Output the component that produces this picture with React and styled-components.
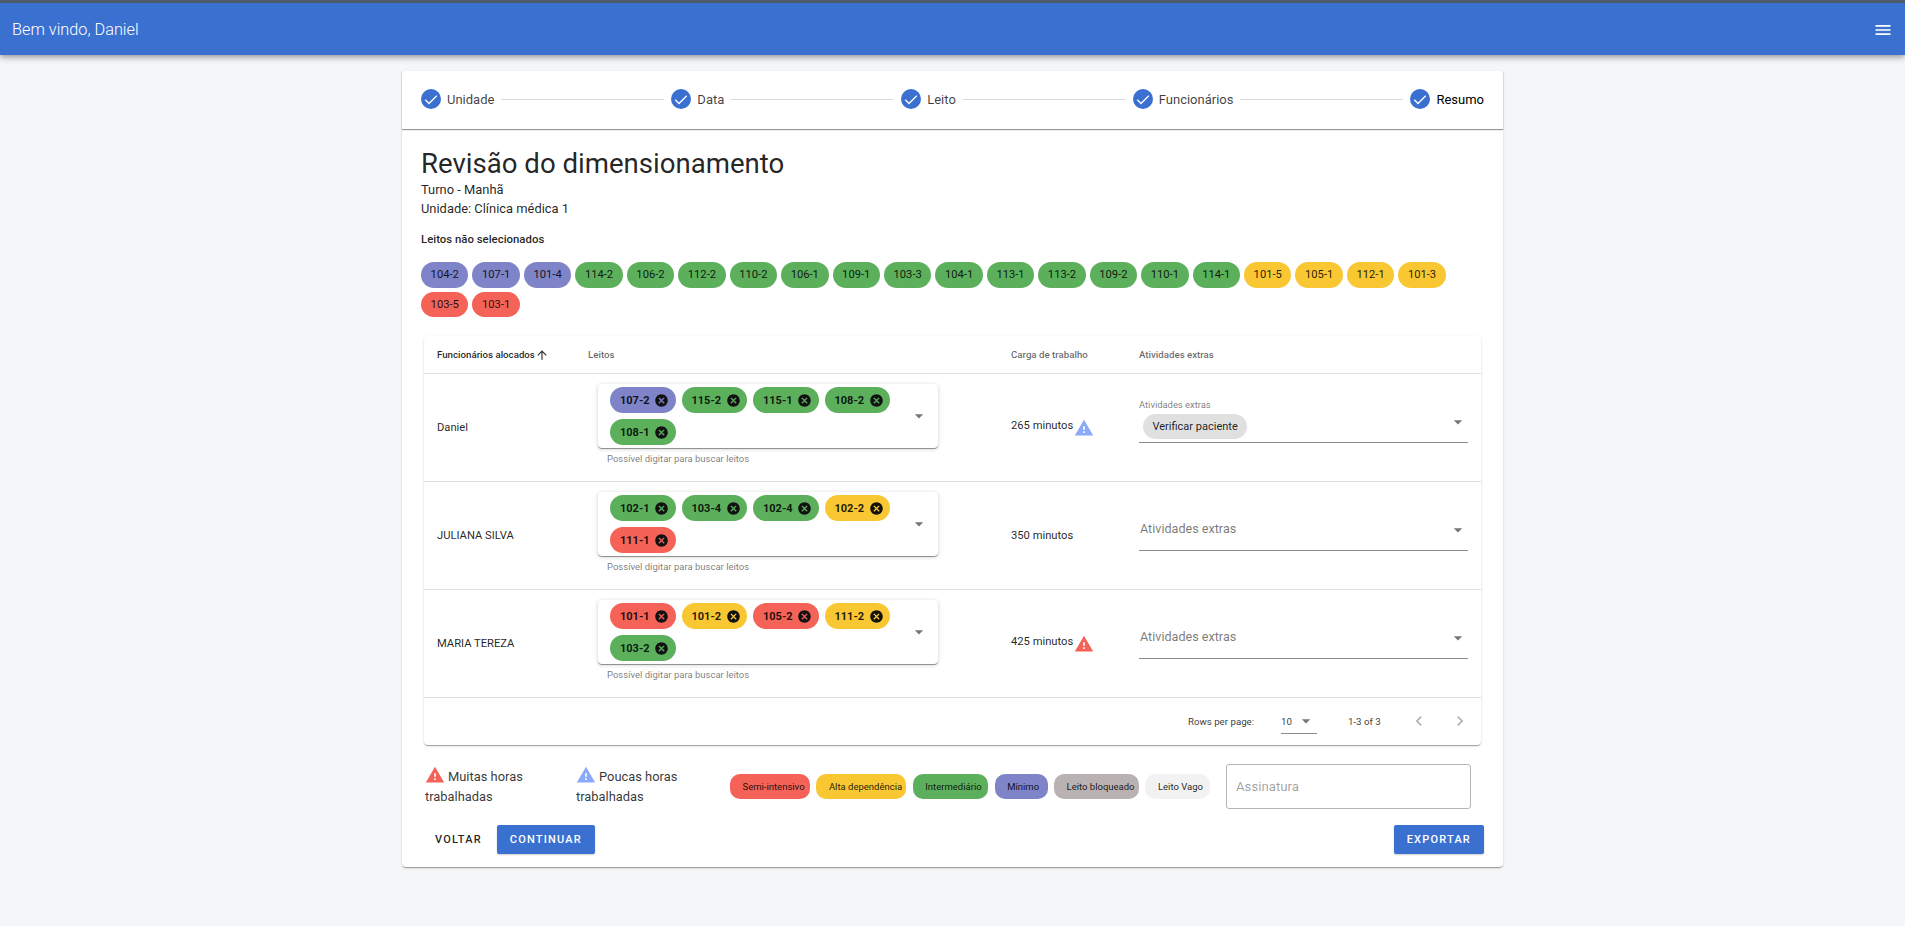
import React from "react"
import styled, { createGlobalStyle } from "styled-components"

const tones = {
    purple: "#7f83c8",
    green: "#5cb05c",
    yellow: "#f9c732",
    red: "#f56258",
    grey: "#bab2b2",
    light: "#f2f2f2",
}

const GlobalStyle = createGlobalStyle`
    html, body {
        margin: 0;
        padding: 0;
        background: #f5f6f8;
        font-family: Roboto, "Liberation Sans", sans-serif;
        color: rgba(0, 0, 0, 0.87);
    }
    * { box-sizing: border-box; }
`

const Page = styled.div`
    min-height: 926px;
    background: #f5f6f8;
`

const AppBar = styled.header`
    height: 55px;
    border-top: 3px solid #4d5c68;
    background: #3a70d0;
    color: #fff;
    display: flex;
    align-items: center;
    justify-content: space-between;
    padding: 0 12px;
    box-shadow: 0 2px 4px -1px rgba(0,0,0,.2), 0 4px 5px 0 rgba(0,0,0,.14), 0 1px 10px 0 rgba(0,0,0,.12);
`

const AppTitle = styled.div`
    font-size: 16.3px;
    font-weight: 300;
    line-height: 24px;
    margin-top: 1px;
`

const MenuIcon = styled.svg`
    width: 20px;
    height: 20px;
    fill: #fff;
    margin-top: 1px;
`

const Card = styled.main`
    width: 1101px;
    margin: 16px auto 0;
    background: #fff;
    border-radius: 4px;
    box-shadow: 0 2px 1px -1px rgba(0,0,0,.2), 0 1px 1px 0 rgba(0,0,0,.14), 0 1px 3px 0 rgba(0,0,0,.12);
`

const Stepper = styled.nav`
    height: 58px;
    display: flex;
    align-items: center;
    padding: 0 19px 2px 17px;
    box-shadow: 0 1px 1px rgba(0,0,0,.4);
`

const Step = styled.div`
    display: flex;
    align-items: center;
    gap: 4px;
    font-size: 13px;
    color: ${({$active}) => $active ? "#000" : "rgba(0,0,0,.75)"};
`

const StepIcon = styled.svg`
    width: 24px;
    height: 24px;
    display: block;
`

const Connector = styled.div`
    flex: 1;
    height: 1px;
    margin: 0 5px 0 7px;
    background: #dcdcdc;
`

const Content = styled.section`
    padding: 18px 19px 13px;
`

const Title = styled.h1`
    margin: 0;
    font-size: 27.6px;
    font-weight: 400;
    line-height: 34px;
`

const SubLine = styled.div`
    font-size: 12.9px;
    line-height: 18.5px;
`

const SectionLabel = styled.div`
    margin-top: 14px;
    font-size: 11.4px;
    font-weight: 500;
    line-height: 14px;
`

const BedList = styled.div`
    display: flex;
    flex-wrap: wrap;
    gap: 4px;
    margin-top: 16px;
`

const Bed = styled.div`
    height: 25.5px;
    display: flex;
    align-items: center;
    padding: 0 9.6px;
    border-radius: 13px;
    font-size: 11.2px;
    background: ${({$tone}) => tones[$tone]};
`

const TablePaper = styled.div`
    margin: 19px 3px 0;
    border-radius: 4px;
    background: #fff;
    box-shadow: 0 2px 1px -1px rgba(0,0,0,.2), 0 1px 1px 0 rgba(0,0,0,.14), 0 1px 3px 0 rgba(0,0,0,.12);
`

const Row = styled.div`
    display: grid;
    grid-template-columns: 151px 423px 128px 1fr;
    height: ${({$head}) => $head ? "38px" : "108px"};
    border-bottom: 1px solid #e0e0e0;
    padding-left: 13px;
    padding-right: 13px;
    align-items: ${({$head}) => $head ? "center" : "stretch"};
`

const HeadCell = styled.div`
    display: flex;
    align-items: center;
    font-size: 9.7px;
    font-weight: 500;
    color: ${({$sorted}) => $sorted ? "rgba(0,0,0,.87)" : "rgba(0,0,0,.6)"};
`

const SortIcon = styled.svg`
    width: 14px;
    height: 14px;
    fill: rgba(0,0,0,.8);
`

const TextCell = styled.div`
    display: flex;
    align-items: center;
    font-size: 11.2px;
    padding-bottom: 1px;
`

const BedCell = styled.div`
    padding: 10px 0 0 10px;
`

const SelectPaper = styled.div`
    position: relative;
    width: 340px;
    height: 64px;
    padding: 3px 36px 0 12px;
    display: flex;
    flex-wrap: wrap;
    align-content: flex-start;
    gap: 6px;
    border-radius: 4px;
    background: #fff;
    box-shadow: 0 1px 0 rgba(0,0,0,.35), 0 1px 4px rgba(0,0,0,.2);
`

const BedChip = styled.div`
    width: 65.5px;
    height: 26px;
    display: flex;
    align-items: center;
    justify-content: space-between;
    padding: 0 8.5px 0 10px;
    border-radius: 13px;
    font-size: 11px;
    font-weight: 700;
    background: ${({$tone}) => tones[$tone]};
`

const ChipClose = styled.svg`
    width: 15px;
    height: 15px;
    margin-right: -2px;
    fill: #111;
    flex: none;
`

const DropArrow = styled.svg`
    position: absolute;
    right: ${({$right}) => $right}px;
    top: ${({$top}) => $top}px;
    width: 20px;
    height: 20px;
    fill: rgba(0,0,0,.54);
`

const HelperText = styled.div`
    margin: 5px 0 0 9px;
    font-size: 9.5px;
    line-height: 12px;
    color: rgba(0,0,0,.54);
`

const LoadCell = styled(TextCell)`
    gap: 1px;
    padding-bottom: ${({$warn}) => $warn ? "5px" : "1px"};
`

const WarnIcon = styled.svg`
    width: 20px;
    height: 20px;
    flex: none;
    fill: ${({$color}) => $color};
    margin-top: ${({$shift}) => $shift || 0}px;
`

const ExtrasCell = styled.div`
    padding-top: 25px;
`

const Field = styled.div`
    position: relative;
    height: 44px;
    display: flex;
    flex-direction: column;
    justify-content: flex-end;
    border-bottom: 1px solid #8c8c8c;
`

const FieldLabel = styled.div`
    font-size: 9.4px;
    line-height: 12px;
    color: rgba(0,0,0,.54);
`

const FieldChip = styled.div`
    align-self: flex-start;
    height: 25px;
    margin: 3px 0 3px 4px;
    padding: 0 9.5px;
    display: flex;
    align-items: center;
    border-radius: 13px;
    font-size: 11px;
    background: #e0e0e0;
`

const FieldPlaceholder = styled.div`
    margin: 0 0 11px 1px;
    font-size: 12.6px;
    line-height: 20px;
    color: rgba(0,0,0,.54);
`

const TableFooter = styled.div`
    height: 47px;
    display: flex;
    align-items: center;
    padding-bottom: 1px;
    font-size: 9.7px;
    color: rgba(0,0,0,.8);
`

const RowsLabel = styled.div`
    margin-left: 764px;
    width: 93px;
`

const RowsSelect = styled.div`
    position: relative;
    width: 36px;
    height: 24px;
    display: flex;
    align-items: center;
    border-bottom: 1px solid #8c8c8c;
    margin-top: 1px;
`

const PageInfo = styled.div`
    margin-left: 31px;
    width: 52px;
`

const PageArrow = styled.svg`
    width: 20px;
    height: 20px;
    fill: rgba(0,0,0,.3);
    margin-left: ${({$gap}) => $gap}px;
`

const Legend = styled.div`
    display: flex;
    align-items: center;
    margin-top: 19px;
    padding: 0 13px 0 4px;
`

const Note = styled.div`
    width: ${({$width}) => $width}px;
    margin-top: -2px;
    padding-right: 20px;
    font-size: 12.9px;
    line-height: 20px;
    color: rgba(0,0,0,.8);
`

const NoteIcon = styled(WarnIcon)`
    display: inline-block;
    vertical-align: -4px;
    margin-right: 3px;
`

const LegendChips = styled.div`
    display: flex;
    gap: 6.4px;
`

const LegendChip = styled.div`
    width: ${({$width}) => $width}px;
    height: 25px;
    display: flex;
    align-items: center;
    padding-left: 12.5px;
    border-radius: 10px;
    font-size: 9.5px;
    white-space: nowrap;
    background: ${({$tone}) => tones[$tone]};
`

const SignatureBox = styled.div`
    width: 245px;
    height: 45px;
    margin-left: auto;
    display: flex;
    align-items: center;
    padding-left: 9px;
    border: 1px solid #b5b5b5;
    border-radius: 3px;
    font-size: 13.2px;
    color: rgba(0,0,0,.38);
`

const Actions = styled.div`
    display: flex;
    align-items: center;
    margin-top: 16px;
`

const Button = styled.button`
    height: 29px;
    border: none;
    border-radius: 2px;
    font-family: inherit;
    font-size: 11px;
    font-weight: 500;
    letter-spacing: 1.2px;
    padding: 0 ${({$ghost}) => $ghost ? "15px 0 14px" : "13px"};
    margin-left: ${({$push}) => $push ? "auto" : "0"};
    color: ${({$ghost}) => $ghost ? "rgba(0,0,0,.87)" : "#fff"};
    background: ${({$ghost}) => $ghost ? "transparent" : "#3a70d0"};
    box-shadow: ${({$ghost}) => $ghost ? "none" : "0 1px 2px rgba(0,0,0,.2)"};
`

const steps = ["Unidade", "Data", "Leito", "Funcionários", "Resumo"]

const freeBeds = [
    ["104-2", "purple"], ["107-1", "purple"], ["101-4", "purple"],
    ["114-2", "green"], ["106-2", "green"], ["112-2", "green"], ["110-2", "green"],
    ["106-1", "green"], ["109-1", "green"], ["103-3", "green"], ["104-1", "green"],
    ["113-1", "green"], ["113-2", "green"], ["109-2", "green"], ["110-1", "green"],
    ["114-1", "green"], ["101-5", "yellow"], ["105-1", "yellow"], ["112-1", "yellow"],
    ["101-3", "yellow"], ["103-5", "red"], ["103-1", "red"],
]

const staff = [
    {
        name: "Daniel",
        load: "265 minutos",
        warn: "#8aa9fb",
        extra: "Verificar paciente",
        beds: [["107-2", "purple"], ["115-2", "green"], ["115-1", "green"], ["108-2", "green"], ["108-1", "green"]],
    },
    {
        name: "JULIANA SILVA",
        load: "350 minutos",
        beds: [["102-1", "green"], ["103-4", "green"], ["102-4", "green"], ["102-2", "yellow"], ["111-1", "red"]],
    },
    {
        name: "MARIA TEREZA",
        load: "425 minutos",
        warn: "#f56258",
        beds: [["101-1", "red"], ["101-2", "yellow"], ["105-2", "red"], ["111-2", "yellow"], ["103-2", "green"]],
    },
]

const legend = [
    ["Semi-intensivo", "red", 80],
    ["Alta dependência", "yellow", 90],
    ["Intermediário", "green", 75.5],
    ["Mínimo", "purple", 53],
    ["Leito bloqueado", "grey", 85],
    ["Leito Vago", "light", 65],
]

const warnPath = "M1 21h22L12 2 1 21zm12-3h-2v-2h2v2zm0-4h-2v-4h2v4z"
const cancelPath = "M12 2C6.47 2 2 6.47 2 12s4.47 10 10 10 10-4.47 10-10S17.53 2 12 2zm5 13.59L15.59 17 12 13.41 8.41 17 7 15.59 10.59 12 7 8.41 8.41 7 12 10.59 15.59 7 17 8.41 13.41 12 17 15.59z"
const dropPath = "M7 10l5 5 5-5z"

function Arrow({right, top}) {
    return (
        <DropArrow $right={right} $top={top} viewBox="0 0 24 24">
            <path d={dropPath} />
        </DropArrow>
    )
}

function StaffRow({person}) {
    return (
        <Row>
            <TextCell>{person.name}</TextCell>
            <BedCell>
                <SelectPaper>
                    {person.beds.map(([bed, tone]) => (
                        <BedChip key={bed} $tone={tone}>
                            {bed}
                            <ChipClose viewBox="0 0 24 24"><path d={cancelPath} /></ChipClose>
                        </BedChip>
                    ))}
                    <Arrow right={9} top={22} />
                </SelectPaper>
                <HelperText>Possível digitar para buscar leitos</HelperText>
            </BedCell>
            <LoadCell $warn={!!person.warn}>
                {person.load}
                {person.warn && (
                    <WarnIcon $color={person.warn} $shift={5} viewBox="0 0 24 24"><path d={warnPath} /></WarnIcon>
                )}
            </LoadCell>
            <ExtrasCell>
                <Field>
                    {person.extra ? (
                        <>
                            <FieldLabel>Atividades extras</FieldLabel>
                            <FieldChip>{person.extra}</FieldChip>
                        </>
                    ) : (
                        <FieldPlaceholder>Atividades extras</FieldPlaceholder>
                    )}
                    <Arrow right={0} top={13} />
                </Field>
            </ExtrasCell>
        </Row>
    )
}

export default function App() {
    return (
        <Page>
            <GlobalStyle />
            <AppBar>
                <AppTitle>Bem vindo, Daniel</AppTitle>
                <MenuIcon viewBox="0 0 24 24">
                    <path d="M3 18h18v-2H3v2zm0-5h18v-2H3v2zm0-7v2h18V6H3z" />
                </MenuIcon>
            </AppBar>
            <Card>
                <Stepper>
                    {steps.map((step, i) => (
                        <React.Fragment key={step}>
                            <Step $active={i === steps.length - 1}>
                                <StepIcon viewBox="0 0 24 24">
                                    <circle cx="12" cy="12" r="10" fill="#3a70d0" />
                                    <path d="M10 15.6l-3.3-3.3-.9.9 4.2 4.2 8.2-8.2-.9-.9z" fill="#fff" />
                                </StepIcon>
                                {step}
                            </Step>
                            {i < steps.length - 1 && <Connector />}
                        </React.Fragment>
                    ))}
                </Stepper>
                <Content>
                    <Title>Revisão do dimensionamento</Title>
                    <SubLine>Turno - Manhã</SubLine>
                    <SubLine>Unidade: Clínica médica 1</SubLine>
                    <SectionLabel>Leitos não selecionados</SectionLabel>
                    <BedList>
                        {freeBeds.map(([bed, tone]) => <Bed key={bed} $tone={tone}>{bed}</Bed>)}
                    </BedList>
                    <TablePaper>
                        <Row $head>
                            <HeadCell $sorted>
                                Funcionários alocados
                                <SortIcon viewBox="0 0 24 24">
                                    <path d="M4 12l1.41 1.41L11 7.83V20h2V7.83l5.58 5.59L20 12l-8-8-8 8z" />
                                </SortIcon>
                            </HeadCell>
                            <HeadCell>Leitos</HeadCell>
                            <HeadCell>Carga de trabalho</HeadCell>
                            <HeadCell>Atividades extras</HeadCell>
                        </Row>
                        {staff.map(person => <StaffRow key={person.name} person={person} />)}
                        <TableFooter>
                            <RowsLabel>Rows per page:</RowsLabel>
                            <RowsSelect>
                                10
                                <Arrow right={1} top={1} />
                            </RowsSelect>
                            <PageInfo>1-3 of 3</PageInfo>
                            <PageArrow $gap={9} viewBox="0 0 24 24">
                                <path d="M15.41 7.41L14 6l-6 6 6 6 1.41-1.41L10.83 12z" />
                            </PageArrow>
                            <PageArrow $gap={21} viewBox="0 0 24 24">
                                <path d="M10 6L8.59 7.41 13.17 12l-4.58 4.59L10 18l6-6z" />
                            </PageArrow>
                        </TableFooter>
                    </TablePaper>
                    <Legend>
                        <Note $width={151}>
                            <NoteIcon $color="#f56258" viewBox="0 0 24 24"><path d={warnPath} /></NoteIcon>
                            Muitas horas trabalhadas
                        </Note>
                        <Note $width={154}>
                            <NoteIcon $color="#8aa9fb" viewBox="0 0 24 24"><path d={warnPath} /></NoteIcon>
                            Poucas horas trabalhadas
                        </Note>
                        <LegendChips>
                            {legend.map(([label, tone, width]) => (
                                <LegendChip key={label} $tone={tone} $width={width}>{label}</LegendChip>
                            ))}
                        </LegendChips>
                        <SignatureBox>Assinatura</SignatureBox>
                    </Legend>
                    <Actions>
                        <Button $ghost>VOLTAR</Button>
                        <Button>CONTINUAR</Button>
                        <Button $push>EXPORTAR</Button>
                    </Actions>
                </Content>
            </Card>
        </Page>
    )
}
